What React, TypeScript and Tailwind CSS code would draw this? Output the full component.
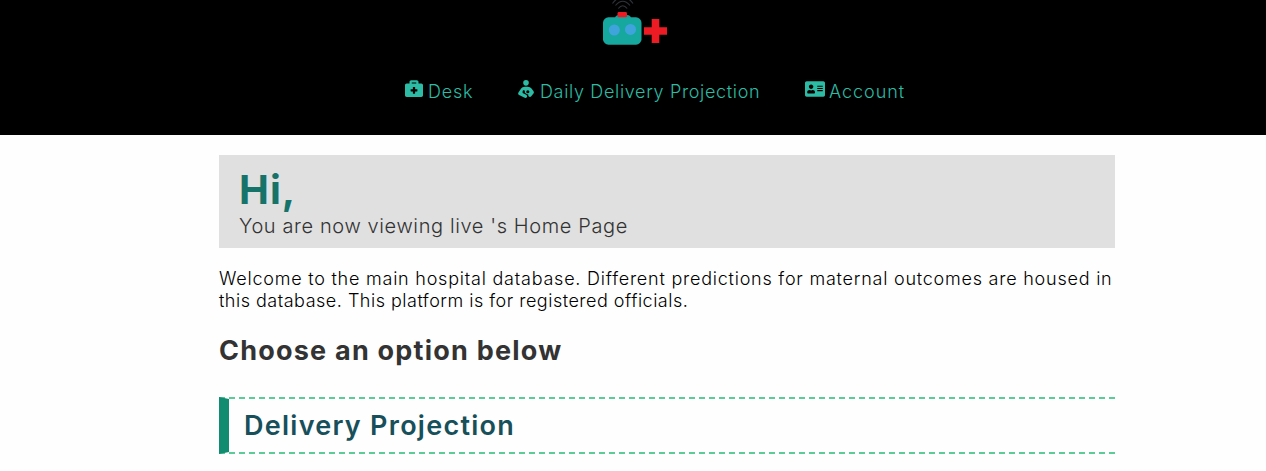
import React from "react";
import { FaAddressCard, FaBriefcaseMedical } from "react-icons/fa";
import { FaPersonBreastfeeding } from "react-icons/fa6";

function Logo() {
  return (
    <svg width="66" height="46" viewBox="0 0 66 46" fill="none" aria-hidden="true">
      <path d="M10.5 3.5Q12.5 0.5 15 -1M31 3.5Q29 0.5 26.5 -1M13.5 5.5Q20.7 -3 28 5.5M16.3 8.5Q20.7 3 25.2 8.5" stroke="#30343b" strokeWidth="1.1" />
      <path d="M13 20v-1.5q0-3.5 4-3.5h8q4 0 4 3.5V20z" fill="#169e97" />
      <rect x="1" y="17.3" width="38.5" height="27.4" rx="5.5" fill="#16a79e" />
      <rect x="15.5" y="12" width="9.5" height="5.3" rx="1.4" fill="#ed1c24" />
      <circle cx="12.3" cy="30" r="5.5" fill="#3fa4dc" />
      <circle cx="28.5" cy="29.4" r="5.5" fill="#3fa4dc" />
      <path d="M49.7 19h7.6v8.2H65v7.6h-7.7V43h-7.6v-8.2H42v-7.6h7.7z" fill="#ed1c24" />
    </svg>
  );
}

export default function App() {
  return (
    <div className="min-h-[471px] bg-[#fefefe] font-[Inter,'Open_Sans',sans-serif]">
      <header className="h-[135px] bg-black">
        <div className="flex h-[79px] items-start pl-[602px]">
          <Logo />
        </div>
        <nav className="flex items-start pl-[405px] text-[18px] leading-[26px] font-light text-[#2cbba4]">
          <a className="flex w-[113px] whitespace-nowrap">
            <FaBriefcaseMedical className="mr-[5px] size-[18px] shrink-0" />
            <span className="tracking-[0.8px]">Desk</span>
          </a>
          <a className="flex w-[287px] whitespace-nowrap">
            <FaPersonBreastfeeding className="mt-px mr-[6px] h-[18px] w-4 shrink-0" />
            <span className="tracking-[0.66px]">Daily Delivery Projection</span>
          </a>
          <a className="flex whitespace-nowrap">
            <FaAddressCard className="mt-px mr-1 h-[18px] w-[20px] shrink-0" />
            <span className="tracking-[0.95px]">Account</span>
          </a>
        </nav>
      </header>
      <main className="ml-[219px] w-[896px] pt-5">
        <section className="h-[93px] bg-[#e0e0e0] px-5 pt-[11px] whitespace-nowrap">
          <h1 className="text-[40px] leading-[48px] font-bold text-[#15736a]"><span className="tracking-[1px]">Hi,</span></h1>
          <p className="text-[20px] leading-6 font-light text-[#333333]"><span className="tracking-[0.61px]">You are now viewing live 's Home Page</span></p>
        </section>
        <p className="mt-5 text-[18px] leading-[22px] font-light whitespace-nowrap text-black">
          <span className="tracking-[0.77px]">Welcome to the main hospital database. Different predictions for maternal outcomes are housed in</span>
          <br />
          <span className="tracking-[0.5px]">this database. This platform is for registered officials.</span>
        </p>
        <h2 className="mt-[22px] text-[27px] leading-[34px] font-bold text-[#333333]"><span className="tracking-[1.22px]">Choose an option below</span></h2>
        <h2 className="mt-[29px] flex h-[57px] items-center border-y-2 border-l-[10px] border-dashed border-y-[#59cc98] border-l-[#118c70] pt-[2px] pl-[15px] text-[27px] font-semibold text-[#17505a] [border-left-style:solid]">
          <span className="tracking-[1.26px]">Delivery Projection</span>
        </h2>
      </main>
    </div>
  );
}
